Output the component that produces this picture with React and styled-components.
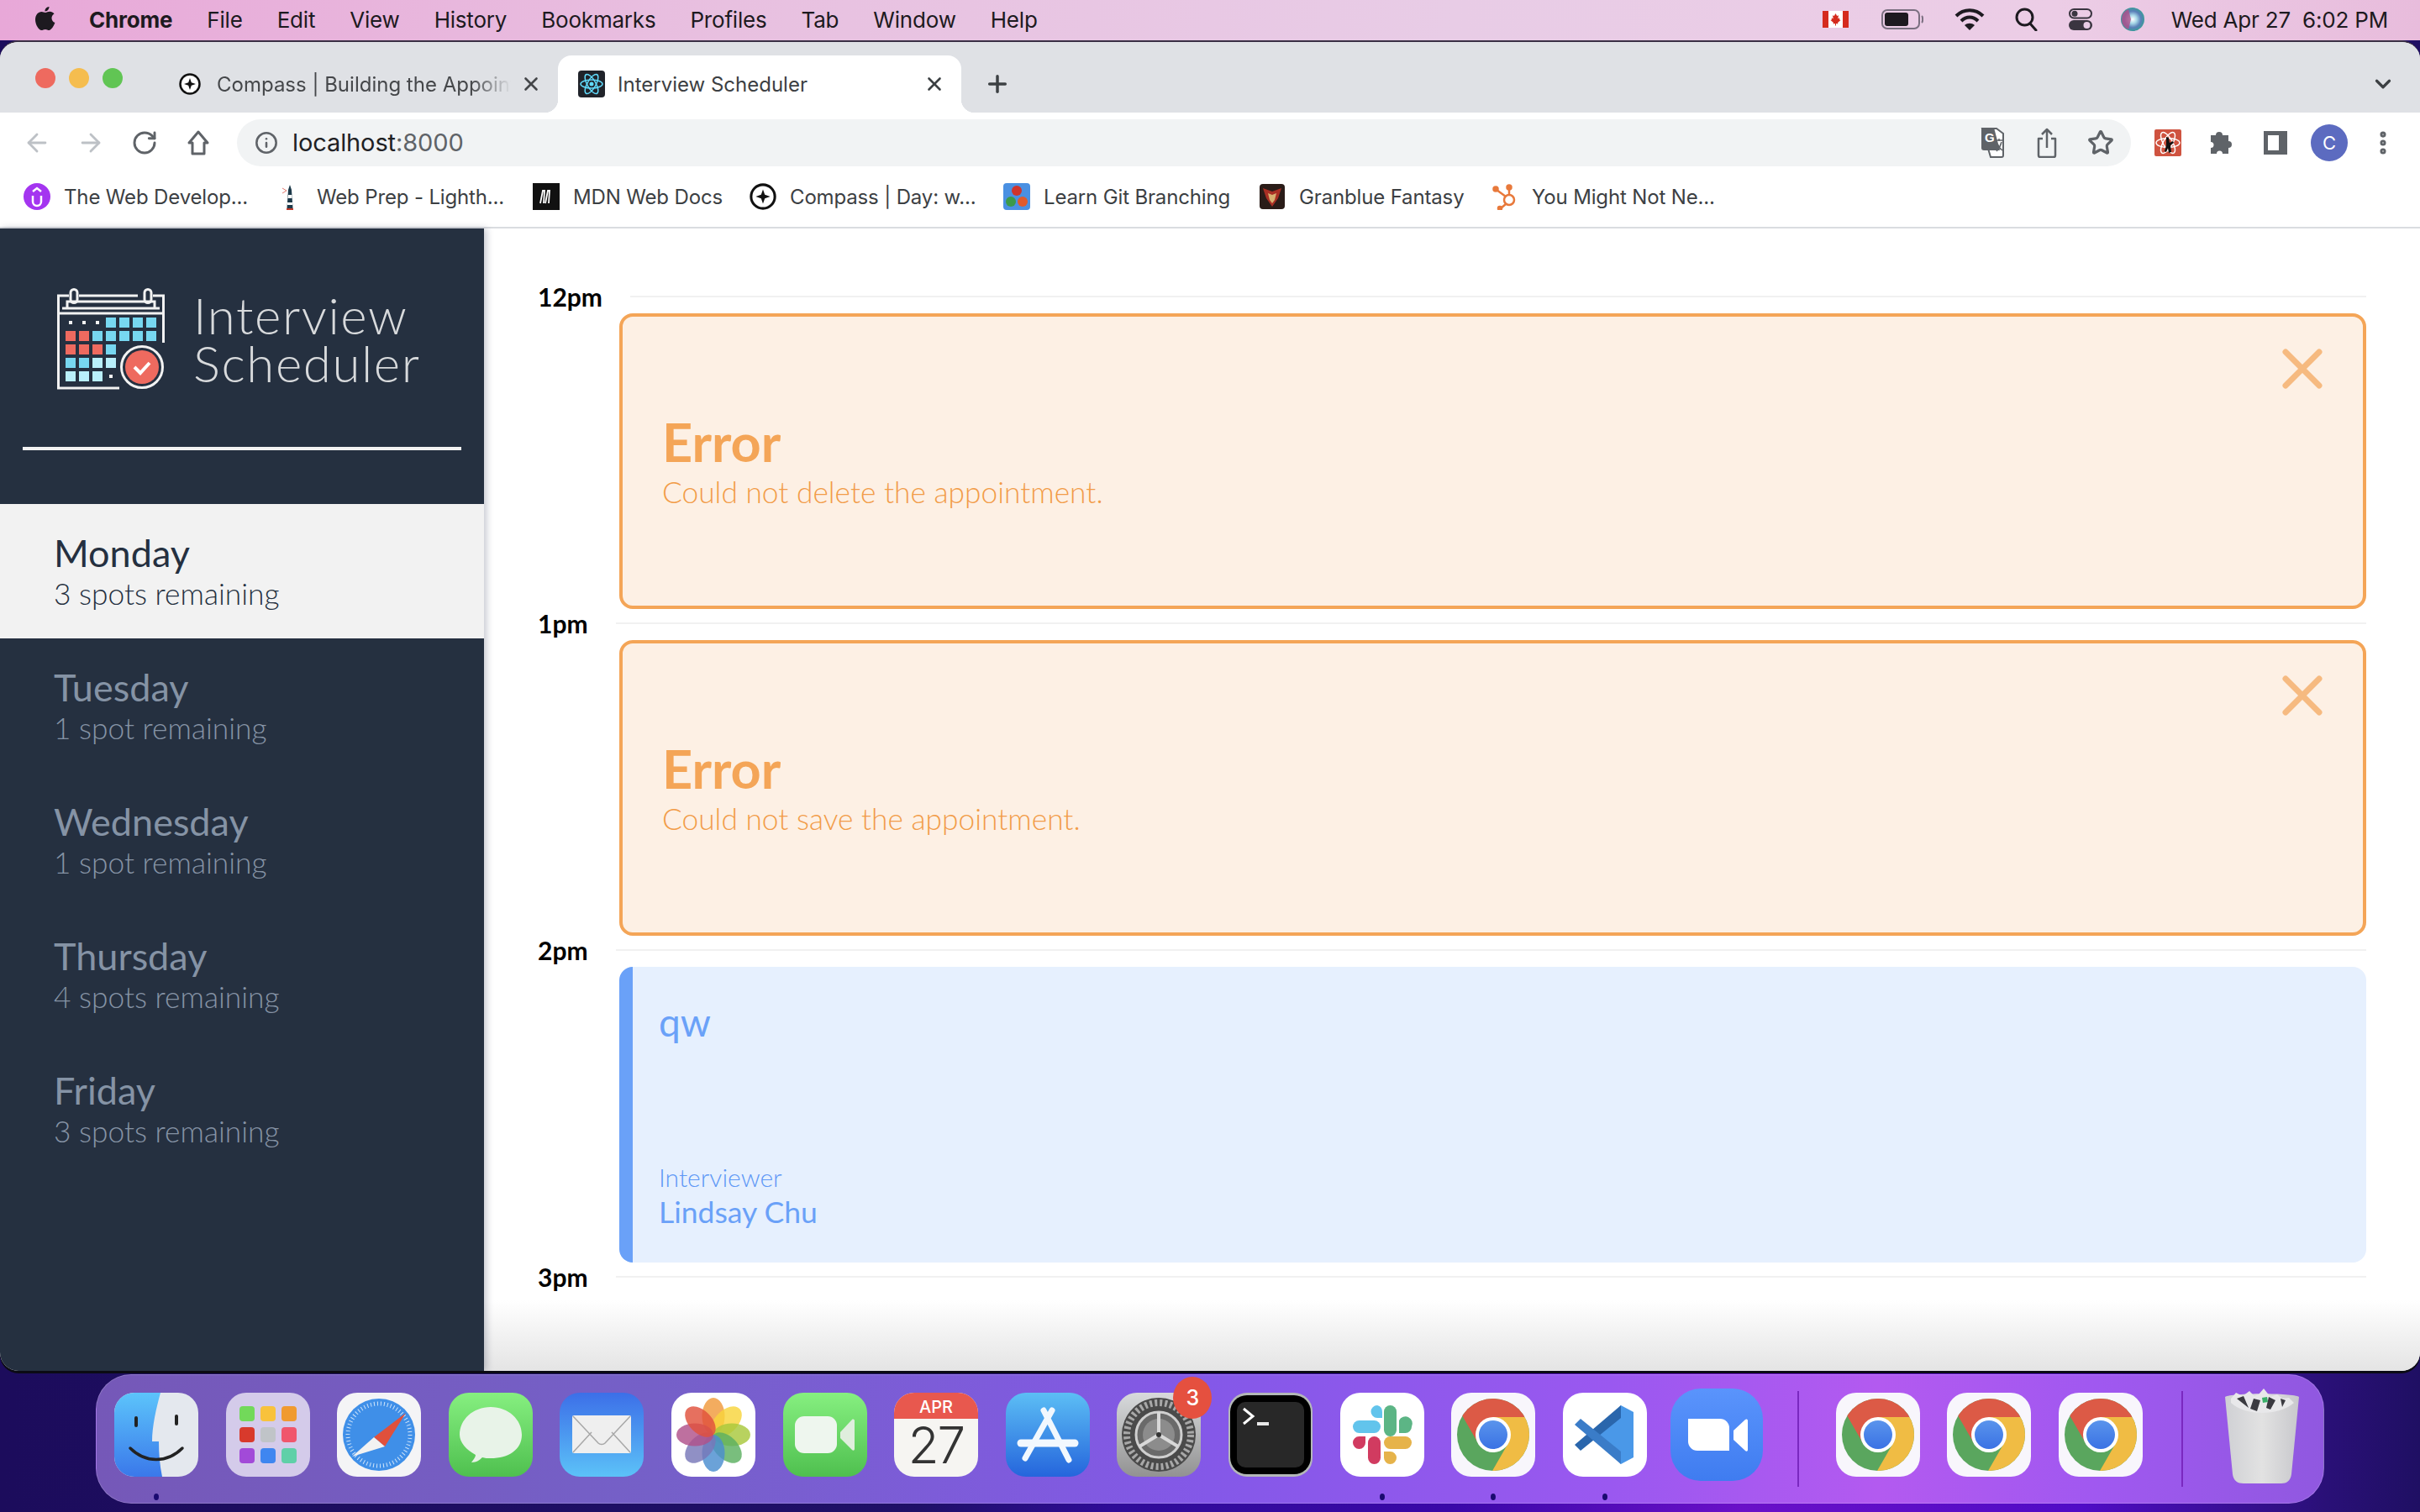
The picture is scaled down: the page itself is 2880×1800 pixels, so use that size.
import React from 'react';
import styled, { createGlobalStyle } from 'styled-components';
import { ArrowLeft, ArrowRight, RotateCw, Info, Star, MoreVertical, X, Plus, ChevronDown } from 'lucide-react';

const GlobalStyle = createGlobalStyle`
    html, body { margin: 0; padding: 0; }
    body { width: 2880px; height: 1800px; overflow: hidden; font-family: "Inter", "Liberation Sans", sans-serif; }
    * { box-sizing: border-box; }
`;

const Desktop = styled.div`
    width: 2880px;
    height: 1800px;
    display: flex;
    flex-direction: column;
    overflow: hidden;
    background: linear-gradient(90deg, #1c0c5c 0%, #1f1068 38%, #2f0c98 46%, #3a08a8 60%, #6a10c8 72%, #500cc6 86%, #2a1078 96%, #1f0f63 100%);
`;

// -------------------------------------------------------------------------------------------------
// mac menu bar
const MenuBar = styled.div`
    height: 48px;
    flex: none;
    display: flex;
    align-items: center;
    padding: 0 38px 2px 41px;
    color: #1d1a20;
    font-size: 26px;
    background: linear-gradient(90deg, #e8a8d8 0%, #e8c0e0 30%, #e8cce6 60%, #eccde6 85%, #e8bcdc 100%);
`;
const MenuLeft = styled.div`
    display: flex;
    align-items: center;
    gap: 41px;
`;
const AppleBox = styled.div`
    width: 26px;
    height: 32px;
    margin-right: -2px;
    display: flex;
`;
const MenuItem = styled.span`
    font-weight: ${(p) => (p.$bold ? 700 : 400)};
    letter-spacing: -0.2px;
`;
const MenuRight = styled.div`
    margin-left: auto;
    display: flex;
    align-items: center;
`;
const StatusSlot = styled.div`
    width: ${(p) => p.$w}px;
    margin-left: ${(p) => p.$ml}px;
    display: flex;
    align-items: center;
    justify-content: center;
`;
const Clock = styled.span`
    margin-left: 32px;
    white-space: pre;
    letter-spacing: -0.2px;
`;

// -------------------------------------------------------------------------------------------------
// chrome
const Window = styled.div`
    height: 1584px;
    flex: none;
    display: flex;
    flex-direction: column;
    background: #fff;
    border-top: 2px solid #3a2f44;
    border-radius: 22px;
    box-shadow: 0 3px 0 #0b0b14;
    overflow: hidden;
`;
const TabStrip = styled.div`
    height: 84px;
    flex: none;
    display: flex;
    align-items: flex-end;
    background: #dfe1e5;
`;
const Lights = styled.div`
    width: 184px;
    height: 100%;
    flex: none;
    padding: 31px 0 0 42px;
    display: flex;
    gap: 16px;
`;
const Light = styled.div`
    width: 24px;
    height: 24px;
    border-radius: 50%;
    background: ${(p) => p.$c};
`;
const Tab = styled.div`
    position: relative;
    width: 480px;
    height: 68px;
    flex: none;
    display: flex;
    align-items: center;
    padding: 0 19px 0 ${(p) => (p.$active ? 24 : 29)}px;
    border-radius: 16px 16px 0 0;
    background: ${(p) => (p.$active ? '#fff' : 'transparent')};
    color: ${(p) => (p.$active ? '#3c4043' : '#45474a')};
    font-size: 24px;
    &::before, &::after {
        content: '';
        display: ${(p) => (p.$active ? 'block' : 'none')};
        position: absolute;
        bottom: 0;
        width: 16px;
        height: 16px;
    }
    &::before { left: -16px; background: radial-gradient(circle at 0 0, transparent 16px, #fff 16.5px); }
    &::after { right: -16px; background: radial-gradient(circle at 100% 0, transparent 16px, #fff 16.5px); }
`;
const TabTitle = styled.div`
    flex: 1;
    margin-left: ${(p) => (p.$fade ? 19 : 15)}px;
    white-space: nowrap;
    overflow: hidden;
    mask-image: ${(p) => (p.$fade ? 'linear-gradient(90deg, #000 84%, transparent 97%)' : 'none')};
`;
const StripButton = styled.div`
    width: ${(p) => p.$w}px;
    height: 68px;
    margin-left: ${(p) => p.$ml || 0}px;
    display: flex;
    align-items: center;
    justify-content: center;
    color: #3c4043;
`;
const Toolbar = styled.div`
    height: 71px;
    flex: none;
    display: flex;
    align-items: center;
    padding: 0 12px;
    background: #fff;
`;
const ToolButton = styled.div`
    width: 64px;
    height: 56px;
    flex: none;
    display: flex;
    align-items: center;
    justify-content: center;
    color: ${(p) => p.$c || '#5f6368'};
`;
const Address = styled.div`
    flex: 1;
    height: 56px;
    margin: 0 12px 0 14px;
    padding: 0 4px 0 3px;
    display: flex;
    align-items: center;
    border-radius: 28px;
    background: #f1f3f4;
`;
const Url = styled.div`
    flex: 1;
    font-size: 29px;
    color: #5f6368;
    letter-spacing: -0.1px;
    span { color: #202124; }
    margin-left: -1px;
`;
const Avatar = styled.div`
    width: 44px;
    height: 44px;
    border-radius: 50%;
    display: flex;
    align-items: center;
    justify-content: center;
    background: #5c6bc0;
    color: #fff;
    font-size: 22px;
`;
const Bookmarks = styled.div`
    height: 67px;
    flex: none;
    display: flex;
    align-items: flex-start;
    padding: 13px 0 0 28px;
    gap: 32px;
    border-bottom: 2px solid #dadce0;
    background: #fff;
`;
const Bookmark = styled.div`
    display: flex;
    align-items: center;
    gap: 16px;
    height: 32px;
    font-size: 24px;
    color: #3c4043;
`;
const BookmarkLabel = styled.span`
    width: ${(p) => p.$w}px;
    white-space: nowrap;
    letter-spacing: -0.15px;
`;

// -------------------------------------------------------------------------------------------------
// scheduler app
const Main = styled.div`
    flex: 1;
    display: flex;
    min-height: 0;
    font-family: "Lato", "Liberation Sans", sans-serif;
`;
const Sidebar = styled.section`
    width: 576px;
    flex: none;
    background: #253040;
    box-shadow: 3px 0 8px rgba(30, 40, 70, 0.25);
    z-index: 1;
`;
const Brand = styled.div`
    height: 264px;
    margin: 0 27px;
    padding: 71px 0 0 41px;
    display: flex;
    border-bottom: 4px solid #f2f2f2;
`;
const BrandName = styled.div`
    margin: 4px 0 0 34px;
    font-size: 60px;
    line-height: 57px;
    font-weight: 300;
    color: #d8dadc;
    letter-spacing: 1.6px;
`;
const DayList = styled.ul`
    list-style: none;
    margin: 64px 0 0;
    padding: 0;
`;
const Day = styled.li`
    height: 160px;
    padding: 32px 0 0 64px;
    background: ${(p) => (p.$selected ? '#f2f2f2' : 'transparent')};
    color: ${(p) => (p.$selected ? '#253040' : '#8593a5')};
`;
const DayName = styled.div`
    font-size: 45px;
    line-height: 52px;
`;
const DaySpots = styled.div`
    font-size: 35.3px;
    line-height: 46px;
    font-weight: 300;
`;
const Schedule = styled.section`
    flex: 1;
    padding: 64px 64px 0;
    background: linear-gradient(180deg, #fff 0, #fff 1276px, #e4e4e4 1360px);
`;
const TimeRow = styled.div`
    height: 34px;
    display: flex;
    align-items: center;
    gap: 33px;
`;
const TimeLabel = styled.span`
    font-size: 30px;
    font-weight: 700;
    color: #000;
`;
const TimeLine = styled.div`
    flex: 1;
    height: 2px;
    background: #f1f1f1;
`;
const Card = styled.article`
    position: relative;
    height: 352px;
    margin: 3px 0 0 97px;
    border-radius: 16px;
`;
const ErrorCard = styled(Card)`
    display: flex;
    flex-direction: column;
    justify-content: center;
    padding: 0 0 0 47px;
    border: 4px solid #f4a557;
    background: #fdf0e4;
    color: #f4a557;
`;
const ErrorTitle = styled.div`
    font-size: 63px;
    line-height: 66px;
    font-weight: 700;
    margin: 3px 0 5px;
`;
const ErrorText = styled.div`
    font-size: 35.3px;
    line-height: 44px;
    font-weight: 300;
    color: #f29c48;
`;
const CloseMark = styled.svg`
    position: absolute;
    top: 36px;
    right: 46px;
    width: 52px;
    height: 52px;
`;
const ShowCard = styled(Card)`
    display: flex;
    flex-direction: column;
    padding: 38px 0 0 31px;
    border-left: 16px solid #6aa1f8;
    background: #e6f0fe;
    color: #6aa1f8;
`;
const Student = styled.div`
    font-size: 46px;
    line-height: 56px;
`;
const InterviewerLabel = styled.div`
    margin-top: auto;
    font-size: 30px;
    line-height: 40px;
    font-weight: 300;
    color: #5e98f6;
`;
const InterviewerName = styled.div`
    margin-bottom: 38px;
    font-size: 35.5px;
    line-height: 44px;
`;

// -------------------------------------------------------------------------------------------------
// dock
const Dock = styled.div`
    width: 2652px;
    height: 154px;
    margin: 4px 0 0 114px;
    padding: 21px 0 0 21px;
    display: flex;
    align-items: flex-start;
    border: 1px solid rgba(255, 255, 255, 0.18);
    border-radius: 42px;
    background: linear-gradient(90deg, #7558b8 0%, #7560c8 25%, #8458e8 50%, #9a58f0 68%, #b35af0 80%, #a058f0 90%, #9058e0 100%);
`;
const DockSlot = styled.div`
    position: relative;
    width: ${(p) => p.$w || 100}px;
    height: ${(p) => p.$h || 100}px;
    margin-top: ${(p) => (100 - (p.$h || 100)) / 2}px;
    margin-left: ${(p) => p.$ml ?? 32.6}px;
    flex: none;
    svg { display: block; width: 100%; height: 100%; }
`;
const RunDot = styled.div`
    position: absolute;
    left: 47px;
    top: 120px;
    width: 6px;
    height: 8px;
    border-radius: 50%;
    background: #1a0a70;
`;
const Badge = styled.div`
    position: absolute;
    top: -19px;
    right: -13px;
    width: 46px;
    height: 50px;
    border-radius: 50%;
    display: flex;
    align-items: center;
    justify-content: center;
    background: #e5503f;
    color: #fff;
    font-size: 25px;
    font-weight: 500;
`;
const DockDivider = styled.div`
    width: 2px;
    height: 114px;
    margin-left: ${(p) => p.$ml}px;
    margin-top: -2px;
    flex: none;
    background: #7a28c0;
`;

// -------------------------------------------------------------------------------------------------
// small icons
const Apple = () => (
    <svg viewBox="0 0 26 32" width="26" height="32">
        <path fill="#1d1a20" d="M17.5 1c.2 2.400-2 5.600-5 5.500-.3-2.700 2.200-5.300 5-5.500zM13 8c1.500 0 3-1.200 5.300-1.200 1.900 0 3.900 1 5.200 2.800-4.500 2.600-3.700 8.700.9 10.500-1.400 3.800-4.300 8.900-7 8.900-1.700 0-2.500-1.100-4.500-1.100s-2.900 1.100-4.500 1.200C5 29 1 22 1 16.500 1 10.800 4.500 7 8.500 7 10.300 7 11.700 8 13 8z" />
    </svg>
);
const Flag = () => (
    <svg viewBox="0 0 31 20" width="31" height="20">
        <rect width="31" height="20" fill="#fff" />
        <rect width="7" height="20" fill="#d52b1e" />
        <rect x="24" width="7" height="20" fill="#d52b1e" />
        <path fill="#d52b1e" d="M15.500 3l1.700 3 1.800-.8-.7 4 2-1-.3 2 1.500.7-3.500 3 .4 1.600-2.400-.4v2.400h-1v-2.400l-2.400.4.400-1.600-3.500-3 1.500-.7-.3-2 2 1-.7-4 1.800.8z" />
    </svg>
);
const Battery = () => (
    <svg viewBox="0 0 50 24" width="50" height="24">
        <rect x="1" y="1" width="44" height="22" rx="6" fill="none" stroke="#7a6f80" strokeWidth="2" />
        <rect x="4" y="4" width="28" height="16" rx="3" fill="#1d1a20" />
        <path d="M48 8c1.500 1 1.500 7 0 8" fill="none" stroke="#7a6f80" strokeWidth="2" />
    </svg>
);
const Wifi = () => (
    <svg viewBox="0 0 36 26" width="36" height="26" fill="none" stroke="#1d1a20" strokeWidth="4">
        <path d="M2 9c9-9 23-9 32 0" />
        <path d="M8 15c6-6 14-6 20 0" />
        <path fill="#1d1a20" stroke="none" d="M18 26l-6-6c3.500-3 8.500-3 12 0z" />
    </svg>
);
const Search = () => (
    <svg viewBox="0 0 27 28" width="27" height="28" fill="none" stroke="#1d1a20" strokeWidth="3">
        <circle cx="11.500" cy="11.500" r="9.500" />
        <path d="M18 19l7 8" strokeLinecap="round" />
    </svg>
);
const Toggles = () => (
    <svg viewBox="0 0 28 26" width="28" height="26">
        <rect x="1" y="1" width="26" height="10.500" rx="5.200" fill="none" stroke="#3a3540" strokeWidth="2" />
        <circle cx="7" cy="6.200" r="3.500" fill="#3a3540" />
        <rect y="14" width="28" height="12" rx="6" fill="#3a3540" />
        <circle cx="21.500" cy="20" r="4" fill="#e8cce6" />
    </svg>
);
const Siri = () => (
    <svg viewBox="0 0 28 28" width="28" height="28">
        <defs>
            <radialGradient id="siri">
                <stop offset="0" stopColor="#fff" />
                <stop offset="0.35" stopColor="#a8d8e8" />
                <stop offset="0.7" stopColor="#5a7fb8" />
                <stop offset="1" stopColor="#3a9a9a" />
            </radialGradient>
        </defs>
        <circle cx="14" cy="14" r="14" fill="url(#siri)" />
        <path d="M1 14a13 13 0 0 1 8-12l3 12-3 12a13 13 0 0 1-8-12z" fill="#b0508a" opacity="0.8" />
    </svg>
);
const CompassIcon = ({ size = 26 }) => (
    <svg viewBox="0 0 26 26" width={size} height={size}>
        <circle cx="13" cy="13" r="11.500" fill="#fff" stroke="#111" strokeWidth="2.500" />
        <path d="M13 6l1.800 5.200L20 13l-5.200 1.800L13 20l-1.800-5.200L6 13l5.200-1.800z" fill="#111" />
    </svg>
);
const ReactTab = () => (
    <svg viewBox="0 0 32 32" width="32" height="32">
        <rect width="32" height="32" rx="4" fill="#20232a" />
        <g fill="none" stroke="#61dafb" strokeWidth="1.500">
            <ellipse cx="16" cy="16" rx="13" ry="5" />
            <ellipse cx="16" cy="16" rx="13" ry="5" transform="rotate(60 16 16)" />
            <ellipse cx="16" cy="16" rx="13" ry="5" transform="rotate(120 16 16)" />
        </g>
        <circle cx="16" cy="16" r="2.500" fill="#61dafb" />
    </svg>
);
const HomeIcon = () => (
    <svg viewBox="0 0 28 32" width="28" height="32" fill="none" stroke="#5f6368" strokeWidth="3" strokeLinejoin="round">
        <path d="M14 3L3 16h4v13h14V16h4z" />
    </svg>
);
const Translate = () => (
    <svg viewBox="0 0 30 36" width="30" height="36">
        <path d="M2 1h17l8 6v26a2 2 0 0 1-2 2H12z" fill="#fff" stroke="#5f6368" strokeWidth="2" />
        <path d="M2 0h14l7 27H4a3 3 0 0 1-3-3V2z" fill="#5f6368" />
        <text x="5" y="17" fontSize="15" fontWeight="700" fill="#fff" fontFamily="Liberation Sans">G</text>
        <path d="M18 15h8M22 13v3M19 28c3-3 5-7 6-11M20 19c1 3 3 6 6 8" fill="none" stroke="#5f6368" strokeWidth="1.500" />
    </svg>
);
const ShareIcon = () => (
    <svg viewBox="0 0 24 36" width="24" height="36" fill="none" stroke="#5f6368" strokeWidth="2.500" strokeLinejoin="round">
        <path d="M7 13H2v20a2 2 0 0 0 2 2h16a2 2 0 0 0 2-2V13h-5" />
        <path d="M12 24V2M6 8l6-6 6 6" />
    </svg>
);
const ReactExt = () => (
    <svg viewBox="0 0 32 32" width="32" height="32">
        <rect width="32" height="32" rx="2" fill="#cf5340" />
        <g fill="none" stroke="#fff" strokeWidth="1.500">
            <ellipse cx="16" cy="16" rx="14" ry="5.500" />
            <ellipse cx="16" cy="16" rx="14" ry="5.500" transform="rotate(60 16 16)" />
            <ellipse cx="16" cy="16" rx="14" ry="5.500" transform="rotate(120 16 16)" />
        </g>
        <path d="M14 9l3 1 1 6 4-2 1 2-4 3 1 8-3 1-1-6-2 5-2-1 2-7z" fill="#111" />
    </svg>
);
const PuzzleIcon = () => (
    <svg viewBox="0 0 30 30" width="30" height="30">
        <path fill="#5f6368" d="M12 2a4 4 0 0 1 4 4h7v7a4 4 0 1 1 0 8v7h-7a3.500 3.500 0 0 0-7 0H2v-7a3.500 3.500 0 0 0 0-7V6h6a4 4 0 0 1 4-4z" />
    </svg>
);
const PanelIcon = () => (
    <svg viewBox="0 0 28 28" width="28" height="28">
        <path fill="#5f6368" fillRule="evenodd" d="M0 0h28v28H0zM5 5v18h13V5z" />
    </svg>
);
const UdemyIcon = () => (
    <svg viewBox="0 0 32 32" width="32" height="32">
        <circle cx="16" cy="16" r="16" fill="#a435f0" />
        <path d="M11 15v7a5 5 0 0 0 10 0v-7M11 10l5-4 5 4" fill="none" stroke="#fff" strokeWidth="2.500" />
    </svg>
);
const Lighthouse = () => (
    <svg viewBox="0 0 24 32" width="32" height="32">
        <path d="M3 6l5 3-5 3" fill="none" stroke="#e07a70" strokeWidth="1" />
        <path d="M12 2l2 6h-4z" fill="#1d3a4a" />
        <path d="M10 8h4l1.500 22h-7z" fill="#1d3a4a" />
        <path d="M10 14h4.500v4H9.500zM9 23h6v3H9z" fill="#fff" />
        <path d="M8 30h8v2H8z" fill="#c0392b" />
    </svg>
);
const MdnIcon = () => (
    <svg viewBox="0 0 32 32" width="32" height="32">
        <rect width="32" height="32" fill="#111" />
        <path d="M9 24l3-15h2l-1 15M15 24l3-15h2l-1 15" stroke="#fff" strokeWidth="1.800" fill="none" />
    </svg>
);
const GitIcon = () => (
    <svg viewBox="0 0 32 32" width="32" height="32">
        <rect width="32" height="32" rx="4" fill="#4a90e2" />
        <circle cx="16" cy="9" r="6" fill="#d0342c" />
        <circle cx="9" cy="22" r="6" fill="#3b9a4a" />
        <circle cx="23" cy="22" r="6" fill="#e05a2c" />
    </svg>
);
const GranblueIcon = () => (
    <svg viewBox="0 0 32 32" width="32" height="32">
        <rect x="1" y="1" width="30" height="30" rx="4" fill="#2a1c18" />
        <path d="M5 6l11 4 11-4-4 12-7 10-7-10z" fill="#a82f24" />
        <path d="M11 12l5 2 5-2-2 8-3 4-3-4z" fill="#d8b070" />
    </svg>
);
const HubIcon = () => (
    <svg viewBox="0 0 32 32" width="32" height="32" fill="none" stroke="#e8793b" strokeWidth="2.500">
        <circle cx="21" cy="20" r="6" />
        <path d="M21 14V7M17 16L6 8M17 25l-6 5" />
        <circle cx="21" cy="5" r="2.500" fill="#e8793b" />
        <circle cx="5" cy="7" r="2.500" fill="#e8793b" />
        <circle cx="10" cy="30" r="2" fill="#e8793b" />
    </svg>
);

const LogoCell = ({ col, row, fill }) => <rect x={10 + col * 16} y={35 + row * 16} width="12" height="12" fill={fill} />;
const LOGO_CELLS = [
    [3, 0, 'c'], [4, 0, 'c'], [5, 0, 'c'], [6, 0, 'c'],
    [0, 1, 'r'], [1, 1, 'r'], [2, 1, 'c'], [3, 1, 'c'], [4, 1, 'c'], [5, 1, 'c'], [6, 1, 'c'],
    [0, 2, 'r'], [1, 2, 'r'], [2, 2, 'r'], [3, 2, 'c'],
    [0, 3, 'c'], [1, 3, 'c'], [2, 3, 'l'], [3, 3, 'l'],
    [0, 4, 'l'], [1, 4, 'l'], [2, 4, 'l'],
];
const LOGO_COLORS = { c: '#77d7f0', r: '#ee6a5f', l: '#b9effb' };
const Logo = () => (
    <svg viewBox="0 0 128 121" width="128" height="121">
        <g fill="none" stroke="#f2f2f2" strokeWidth="3">
            <path d="M74 119H1.500V9H14M26 9h70M114 9h12.500v56" />
            <path d="M1.500 30h125M6 24h116M12 24v-8h104v8" />
            <rect x="16" y="1.500" width="8" height="16" rx="4" />
            <rect x="104" y="1.500" width="8" height="16" rx="4" />
        </g>
        {LOGO_CELLS.map(([col, row, c]) => (
            <LogoCell key={`${col}-${row}`} col={col} row={row} fill={LOGO_COLORS[c]} />
        ))}
        <g fill="#f2f2f2">
            <rect x="14" y="39" width="4" height="4" />
            <rect x="30" y="39" width="4" height="4" />
            <rect x="46" y="39" width="4" height="4" />
            <rect x="62" y="103" width="4" height="4" />
        </g>
        <circle cx="101" cy="94" r="24.500" fill="#253040" stroke="#f2f2f2" strokeWidth="3" />
        <circle cx="101" cy="94" r="20" fill="#ee6a5f" />
        <path d="M92 94l7 7 11-12" fill="none" stroke="#fff" strokeWidth="4" />
    </svg>
);

// -------------------------------------------------------------------------------------------------
// dock icons, all 100x100
const Finder = () => (
    <svg viewBox="0 0 100 100">
        <defs>
            <linearGradient id="fb" x1="0" y1="0" x2="0" y2="1"><stop offset="0" stopColor="#5cc4fb" /><stop offset="1" stopColor="#3a78ea" /></linearGradient>
        </defs>
        <rect width="100" height="100" rx="24" fill="#e4e8ee" />
        <path d="M24 0h31c-5 18-10 40-10 58h8c0 14 1 28 4 42H24A24 24 0 0 1 0 76V24A24 24 0 0 1 24 0z" fill="url(#fb)" />
        <path d="M26 30v9M74 28v9" stroke="#222" strokeWidth="4" strokeLinecap="round" />
        <path d="M19 66c18 18 44 18 62 0" fill="none" stroke="#222" strokeWidth="3.500" strokeLinecap="round" />
    </svg>
);
const LAUNCH = ['#72d95a', '#f8c23c', '#f09a30', '#d83a2c', '#c0c4c8', '#f0566c', '#a24ad8', '#3f86f0', '#5fd0a8'];
const Launchpad = () => (
    <svg viewBox="0 0 100 100">
        <rect width="100" height="100" rx="24" fill="#d4cbea" />
        {LAUNCH.map((c, i) => (
            <rect key={c} x={16 + (i % 3) * 25} y={16 + Math.floor(i / 3) * 25} width="18" height="18" rx="4" fill={c} />
        ))}
    </svg>
);
const Safari = () => (
    <svg viewBox="0 0 100 100">
        <rect width="100" height="100" rx="24" fill="#f4f4f6" />
        <circle cx="50" cy="50" r="43" fill="#3f8fe8" />
        <circle cx="50" cy="50" r="37" fill="none" stroke="#cfe4fa" strokeWidth="5" strokeDasharray="1 3" />
        <path d="M82 24L44 53l13 11z" fill="#e0503c" />
        <path d="M18 76l26-23 13 11z" fill="#f2f2f2" />
    </svg>
);
const Messages = () => (
    <svg viewBox="0 0 100 100">
        <defs>
            <linearGradient id="mg" x1="0" y1="0" x2="0" y2="1"><stop offset="0" stopColor="#86ef80" /><stop offset="1" stopColor="#4fc04f" /></linearGradient>
        </defs>
        <rect width="100" height="100" rx="24" fill="url(#mg)" />
        <path d="M50 17c21 0 37 15 37 33S71 78 50 78c-4 0-7 0-10-1-3 3-7 6-13 6 2-3 5-6 5-9-11-6-19-15-19-24 0-18 16-33 37-33z" fill="#e8f3e8" />
    </svg>
);
const Mail = () => (
    <svg viewBox="0 0 100 100">
        <defs>
            <linearGradient id="mlg" x1="0" y1="0" x2="0" y2="1"><stop offset="0" stopColor="#3c6fe8" /><stop offset="1" stopColor="#5cc2f8" /></linearGradient>
        </defs>
        <rect width="100" height="100" rx="24" fill="url(#mlg)" />
        <rect x="15" y="27" width="70" height="45" rx="2" fill="#efefef" />
        <path d="M16 28l30 32c2 2 6 2 8 0l30-32M16 71l22-24M84 71L62 47" fill="none" stroke="#a8a8a8" strokeWidth="1.500" />
    </svg>
);
const PETALS = ['#f09a3c', '#f8d43c', '#a8c83c', '#5cb060', '#4a8ed0', '#7878b8', '#b0508a', '#e0503c'];
const Photos = () => (
    <svg viewBox="0 0 100 100">
        <rect width="100" height="100" rx="24" fill="#fff" />
        {PETALS.map((c, i) => (
            <ellipse key={c} cx="50" cy="28" rx="13.500" ry="22" fill={c} opacity="0.82" transform={`rotate(${i * 45} 50 50)`} />
        ))}
    </svg>
);
const FaceTime = () => (
    <svg viewBox="0 0 100 100">
        <defs>
            <linearGradient id="ftg" x1="0" y1="0" x2="0" y2="1"><stop offset="0" stopColor="#86ef80" /><stop offset="1" stopColor="#4fc04f" /></linearGradient>
        </defs>
        <rect width="100" height="100" rx="24" fill="url(#ftg)" />
        <rect x="14" y="28" width="50" height="44" rx="11" fill="#eef6ee" />
        <path d="M68 47l14-15c1-1 3 0 3 1v34c0 2-2 2-3 1L68 54z" fill="#dfeedd" />
    </svg>
);
const CalendarApp = () => (
    <svg viewBox="0 0 100 100">
        <clipPath id="calclip"><rect width="100" height="100" rx="24" /></clipPath>
        <g clipPath="url(#calclip)">
            <rect width="100" height="100" fill="#f6f5f2" />
            <rect width="100" height="31" fill="#e8584e" />
        </g>
        <text x="50" y="24" textAnchor="middle" fontSize="20" fontWeight="500" fill="#fff" fontFamily="Inter">APR</text>
        <text x="50" y="84" textAnchor="middle" fontSize="60" fontWeight="300" fill="#333" fontFamily="Inter" letterSpacing="-2">27</text>
    </svg>
);
const AppStore = () => (
    <svg viewBox="0 0 100 100">
        <defs>
            <linearGradient id="asg" x1="0" y1="0" x2="0" y2="1"><stop offset="0" stopColor="#5cbef5" /><stop offset="1" stopColor="#2565dc" /></linearGradient>
        </defs>
        <rect width="100" height="100" rx="24" fill="url(#asg)" />
        <g stroke="#f2f8fe" strokeLinecap="round" fill="none">
            <path d="M55 21L23 78M45 21l30 59" strokeWidth="7" />
            <path d="M18 60h64" strokeWidth="9" />
        </g>
    </svg>
);
const SystemPrefs = () => (
    <svg viewBox="0 0 100 100">
        <defs>
            <linearGradient id="spg" x1="0" y1="0" x2="0" y2="1"><stop offset="0" stopColor="#d8dadc" /><stop offset="1" stopColor="#929292" /></linearGradient>
        </defs>
        <rect width="100" height="100" rx="24" fill="url(#spg)" />
        <circle cx="50" cy="50" r="44" fill="#4a4a4a" />
        <circle cx="50" cy="50" r="38" fill="none" stroke="#a8a8a8" strokeWidth="8" strokeDasharray="3 3" />
        <circle cx="50" cy="50" r="27" fill="#6a6a6a" stroke="#cfcfcf" strokeWidth="3" />
        <circle cx="50" cy="50" r="19" fill="#8c8c8c" />
        <path d="M50 50V23M50 50L27 64M50 50l23 14" stroke="#d8d8d8" strokeWidth="4" />
        <circle cx="50" cy="50" r="3" fill="#333" />
    </svg>
);
const Terminal = () => (
    <svg viewBox="0 0 100 100">
        <rect width="100" height="100" rx="22" fill="#b4b8b8" />
        <rect x="2" y="3" width="96" height="94" rx="20" fill="#000" />
        <rect x="10" y="11" width="80" height="78" rx="10" fill="#282828" />
        <path d="M18 19l11 9-11 9" fill="none" stroke="#fff" strokeWidth="3" />
        <path d="M34 37h14" stroke="#e8e8e8" strokeWidth="4" />
    </svg>
);
const Slack = () => (
    <svg viewBox="0 0 100 100">
        <rect width="100" height="100" rx="24" fill="#fff" />
        <rect x="52" y="15" width="15" height="37" rx="7.500" fill="#5cb585" />
        <path d="M44 15a7.500 7.500 0 0 0 0 15h6v-7a8 8 0 0 0-6-8z" fill="#62c4ec" />
        <rect x="15" y="33" width="33" height="15" rx="7.500" fill="#62c4ec" />
        <path d="M70 33a7.500 7.500 0 0 1 15 7.500 7.500 7.500 0 0 1-7.500 7.500H70z" fill="#5cb585" />
        <rect x="52" y="52" width="33" height="15" rx="7.500" fill="#e6b34a" />
        <path d="M52 70h7.500a7.500 7.500 0 0 1 0 15A7.500 7.500 0 0 1 52 77.500z" fill="#e6b34a" />
        <rect x="33" y="52" width="15" height="33" rx="7.500" fill="#d13b60" />
        <path d="M15 59.500A7.500 7.500 0 0 1 22.500 52H30v7.500a7.500 7.500 0 0 1-15 0z" fill="#d13b60" />
    </svg>
);
const ChromeApp = () => (
    <svg viewBox="0 0 100 100">
        <defs>
            <clipPath id="chclip"><circle cx="50" cy="50" r="43" /></clipPath>
            <linearGradient id="chb" x1="0" y1="0" x2="0" y2="1"><stop offset="0" stopColor="#5a94ec" /><stop offset="1" stopColor="#3a72e4" /></linearGradient>
        </defs>
        <rect width="100" height="100" rx="24" fill="#f8f6fc" />
        <g clipPath="url(#chclip)">
            <rect width="100" height="100" fill="#5aa65e" />
            <path d="M50 29h50v71H45l4-7 19-33z" fill="#f0bc44" />
            <path d="M50 29h50v-39H0v15l13 22 19 33z" fill="#dc5a46" />
        </g>
        <circle cx="50" cy="50" r="21" fill="#fff" />
        <circle cx="50" cy="50" r="17" fill="url(#chb)" />
    </svg>
);
const VsCode = () => (
    <svg viewBox="0 0 100 100">
        <rect width="100" height="100" rx="24" fill="#fff" />
        <path d="M69 15L38 50l31 35 15-8V23z" fill="#4a98e8" />
        <path d="M69 15L14 62l7 7L69 30z" fill="#2a66ac" />
        <path d="M14 38l7-7 48 39v15z" fill="#3a7cc8" />
    </svg>
);
const ZoomApp = () => (
    <svg viewBox="0 0 110 110">
        <defs>
            <linearGradient id="zg" x1="0" y1="0" x2="0" y2="1"><stop offset="0" stopColor="#5a94fc" /><stop offset="1" stopColor="#3f7cf0" /></linearGradient>
        </defs>
        <rect width="110" height="110" rx="36" fill="url(#zg)" />
        <path d="M21 36h38a11 11 0 0 1 11 11v27H32a11 11 0 0 1-11-11z" fill="#fff" />
        <path d="M75 50l14-13c1-1 3-.5 3 1v35c0 2-2 2-3 1L75 61z" fill="#fff" />
    </svg>
);
const Trash = () => (
    <svg viewBox="0 0 88 115">
        <defs>
            <linearGradient id="tg" x1="0" y1="0" x2="1" y2="0"><stop offset="0" stopColor="#cfd0d4" /><stop offset="0.5" stopColor="#e2e2e2" /><stop offset="1" stopColor="#c8c8cc" /></linearGradient>
        </defs>
        <path d="M0 12c8-5 80-5 88 0l-9 92c-1 8-6 11-12 11H22c-7 0-12-3-13-11z" fill="url(#tg)" />
        <path d="M7 14l6-7 8 4 8-6 6 6 5-2 6-7 8 10 8-3 6 5 8-1 6 6c-18 16-58 16-75 0z" fill="#e8e8ea" />
        <path d="M14 14l8-3 6 14zM34 14l8 2-4 13-8-3zM52 12l8 4-6 11-5-2zM66 14l6 2-4 8z" fill="#3a3a40" />
        <path d="M44 13l6-1 1 6-6 1z" fill="#3ab06a" />
    </svg>
);

// -------------------------------------------------------------------------------------------------
const MENU = ['File', 'Edit', 'View', 'History', 'Bookmarks', 'Profiles', 'Tab', 'Window', 'Help'];
const DAYS = [
    { name: 'Monday', spots: '3 spots remaining', selected: true },
    { name: 'Tuesday', spots: '1 spot remaining' },
    { name: 'Wednesday', spots: '1 spot remaining' },
    { name: 'Thursday', spots: '4 spots remaining' },
    { name: 'Friday', spots: '3 spots remaining' },
];
const BOOKMARKS = [
    { icon: <UdemyIcon />, label: 'The Web Develop...', w: 221 },
    { icon: <Lighthouse />, label: 'Web Prep - Lighth...', w: 225 },
    { icon: <MdnIcon />, label: 'MDN Web Docs', w: 178 },
    { icon: <CompassIcon size={32} />, label: 'Compass | Day: w...', w: 222 },
    { icon: <GitIcon />, label: 'Learn Git Branching', w: 224 },
    { icon: <GranblueIcon />, label: 'Granblue Fantasy', w: 197 },
    { icon: <HubIcon />, label: 'You Might Not Ne...', w: 217 },
];

const Hour = ({ time }) => (
    <TimeRow>
        <TimeLabel>{time}</TimeLabel>
        <TimeLine />
    </TimeRow>
);

const ErrorAppointment = ({ message }) => (
    <ErrorCard>
        <CloseMark viewBox="0 0 52 52">
            <path d="M6 6l40 40M46 6L6 46" stroke="#f6ba80" strokeWidth="7" strokeLinecap="round" />
        </CloseMark>
        <ErrorTitle>Error</ErrorTitle>
        <ErrorText>{message}</ErrorText>
    </ErrorCard>
);

const App = () => (
    <Desktop>
        <GlobalStyle />
        <MenuBar>
            <MenuLeft>
                <AppleBox><Apple /></AppleBox>
                <MenuItem $bold>Chrome</MenuItem>
                {MENU.map((m) => <MenuItem key={m}>{m}</MenuItem>)}
            </MenuLeft>
            <MenuRight>
                <StatusSlot $w={31} $ml={0}><Flag /></StatusSlot>
                <StatusSlot $w={50} $ml={39}><Battery /></StatusSlot>
                <StatusSlot $w={36} $ml={37}><Wifi /></StatusSlot>
                <StatusSlot $w={27} $ml={36}><Search /></StatusSlot>
                <StatusSlot $w={28} $ml={37}><Toggles /></StatusSlot>
                <StatusSlot $w={28} $ml={34}><Siri /></StatusSlot>
                <Clock>Wed Apr 27  6:02 PM</Clock>
            </MenuRight>
        </MenuBar>

        <Window>
            <TabStrip>
                <Lights>
                    <Light $c="#ee6a5f" />
                    <Light $c="#f5bd4f" />
                    <Light $c="#61c554" />
                </Lights>
                <Tab>
                    <CompassIcon />
                    <TabTitle $fade>Compass | Building the Appointment</TabTitle>
                    <X size={26} strokeWidth={2.4} />
                </Tab>
                <Tab $active>
                    <ReactTab />
                    <TabTitle>Interview Scheduler</TabTitle>
                    <X size={26} strokeWidth={2.4} />
                </Tab>
                <StripButton $w={86}><Plus size={32} strokeWidth={2.6} /></StripButton>
                <StripButton $w={64} $ml={1574}><ChevronDown size={30} strokeWidth={2.6} /></StripButton>
            </TabStrip>

            <Toolbar>
                <ToolButton $c="#bdc1c6"><ArrowLeft size={34} strokeWidth={2} /></ToolButton>
                <ToolButton $c="#bdc1c6"><ArrowRight size={34} strokeWidth={2} /></ToolButton>
                <ToolButton><RotateCw size={32} strokeWidth={2.2} /></ToolButton>
                <ToolButton><HomeIcon /></ToolButton>
                <Address>
                    <ToolButton><Info size={28} strokeWidth={2.2} /></ToolButton>
                    <Url><span>localhost</span>:8000</Url>
                    <ToolButton><Translate /></ToolButton>
                    <ToolButton><ShareIcon /></ToolButton>
                    <ToolButton><Star size={32} strokeWidth={2.4} /></ToolButton>
                </Address>
                <ToolButton><ReactExt /></ToolButton>
                <ToolButton><PuzzleIcon /></ToolButton>
                <ToolButton><PanelIcon /></ToolButton>
                <ToolButton><Avatar>C</Avatar></ToolButton>
                <ToolButton><MoreVertical size={34} strokeWidth={3} /></ToolButton>
            </Toolbar>

            <Bookmarks>
                {BOOKMARKS.map((b) => (
                    <Bookmark key={b.label}>
                        {b.icon}
                        <BookmarkLabel $w={b.w}>{b.label}</BookmarkLabel>
                    </Bookmark>
                ))}
            </Bookmarks>

            <Main>
                <Sidebar>
                    <Brand>
                        <Logo />
                        <BrandName>Interview<br />Scheduler</BrandName>
                    </Brand>
                    <DayList>
                        {DAYS.map((d) => (
                            <Day key={d.name} $selected={d.selected}>
                                <DayName>{d.name}</DayName>
                                <DaySpots>{d.spots}</DaySpots>
                            </Day>
                        ))}
                    </DayList>
                </Sidebar>
                <Schedule>
                    <Hour time="12pm" />
                    <ErrorAppointment message="Could not delete the appointment." />
                    <Hour time="1pm" />
                    <ErrorAppointment message="Could not save the appointment." />
                    <Hour time="2pm" />
                    <ShowCard>
                        <Student>qw</Student>
                        <InterviewerLabel>Interviewer</InterviewerLabel>
                        <InterviewerName>Lindsay Chu</InterviewerName>
                    </ShowCard>
                    <Hour time="3pm" />
                </Schedule>
            </Main>
        </Window>

        <Dock>
            <DockSlot $ml={0}><Finder /><RunDot /></DockSlot>
            <DockSlot><Launchpad /></DockSlot>
            <DockSlot><Safari /></DockSlot>
            <DockSlot><Messages /></DockSlot>
            <DockSlot><Mail /></DockSlot>
            <DockSlot><Photos /></DockSlot>
            <DockSlot><FaceTime /></DockSlot>
            <DockSlot><CalendarApp /></DockSlot>
            <DockSlot><AppStore /></DockSlot>
            <DockSlot><SystemPrefs /><Badge>3</Badge></DockSlot>
            <DockSlot><Terminal /></DockSlot>
            <DockSlot><Slack /><RunDot /></DockSlot>
            <DockSlot><ChromeApp /><RunDot /></DockSlot>
            <DockSlot><VsCode /><RunDot /></DockSlot>
            <DockSlot $w={110} $h={110} $ml={28}><ZoomApp /></DockSlot>
            <DockDivider $ml={41} />
            <DockSlot $ml={44}><ChromeApp /></DockSlot>
            <DockSlot><ChromeApp /></DockSlot>
            <DockSlot><ChromeApp /></DockSlot>
            <DockDivider $ml={46} />
            <DockSlot $w={88} $h={115} $ml={50}><Trash /></DockSlot>
        </Dock>
    </Desktop>
);

export default App;
